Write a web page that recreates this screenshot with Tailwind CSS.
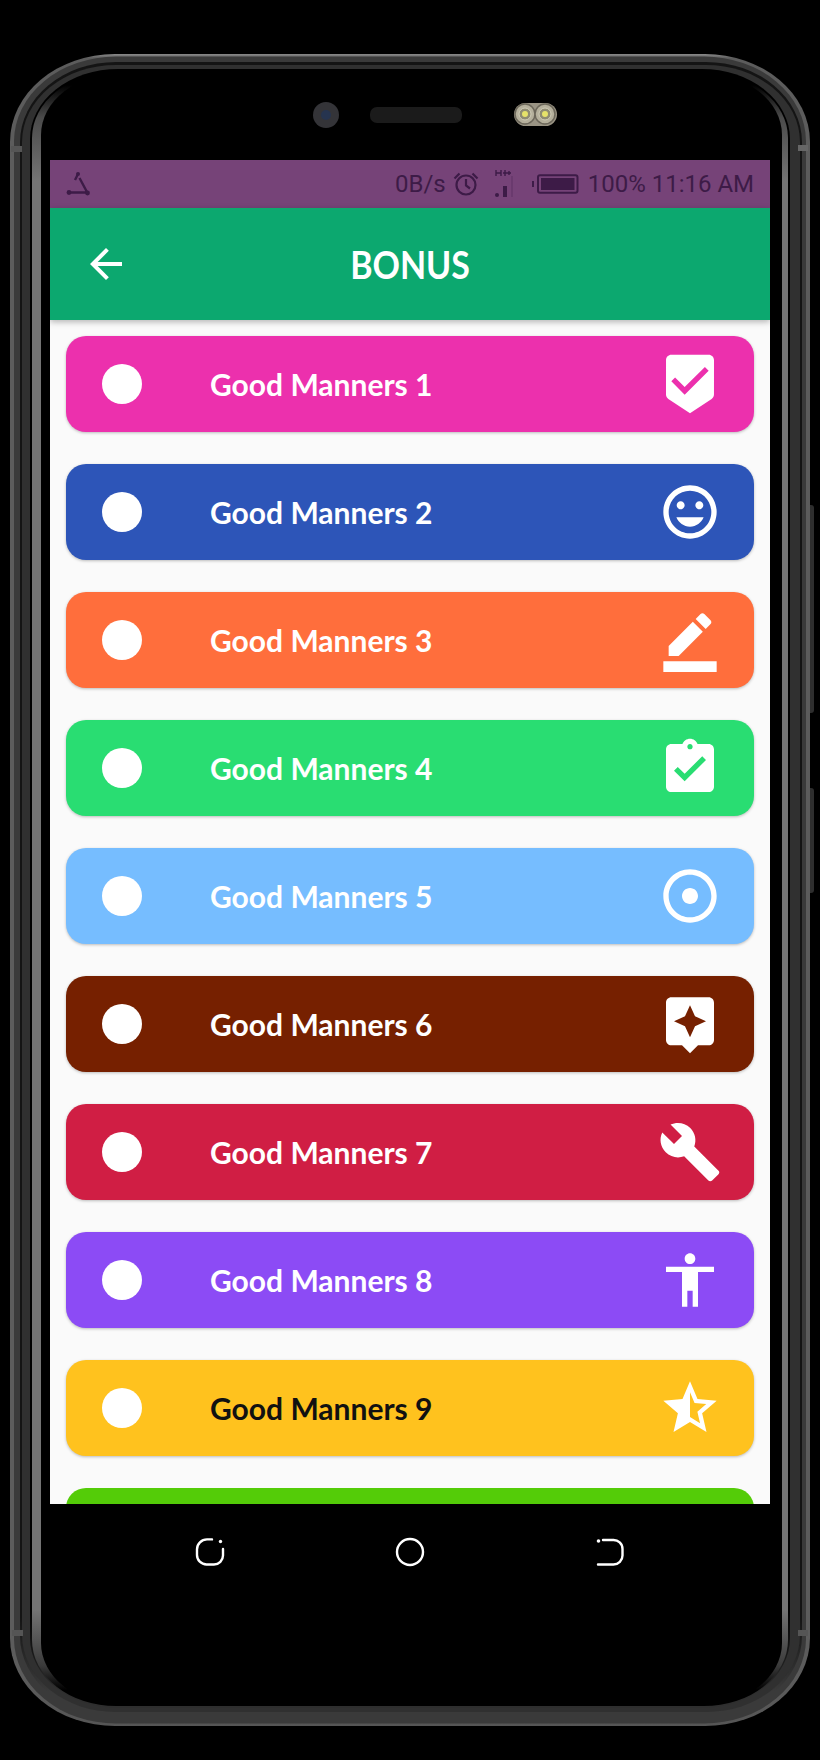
<!DOCTYPE html>
<html><head><meta charset="utf-8"><script src="https://cdn.jsdelivr.net/npm/@tailwindcss/browser@4"></script></head>
<body class="bg-black">
<div class="relative w-[820px] h-[1760px] bg-black overflow-hidden font-['Lato',sans-serif]">
  <svg class="absolute inset-0" width="820" height="1760" viewBox="0 0 820 1760">
    <defs>
      <linearGradient id="inner" gradientUnits="userSpaceOnUse" x1="0" y1="85" x2="0" y2="1690">
        <stop offset="0" stop-color="#000"/><stop offset="0.02" stop-color="#4a4a4a"/><stop offset="0.06" stop-color="#747474"/><stop offset="0.95" stop-color="#747474"/><stop offset="0.985" stop-color="#3a3a3a"/><stop offset="1" stop-color="#000"/>
      </linearGradient>
      <linearGradient id="outer" gradientUnits="userSpaceOnUse" x1="0" y1="54" x2="0" y2="1726">
        <stop offset="0" stop-color="#8a8a8a"/><stop offset="0.0025" stop-color="#5c5c5c"/><stop offset="0.97" stop-color="#5c5c5c"/><stop offset="1" stop-color="#555"/>
      </linearGradient>
      <linearGradient id="gap" gradientUnits="userSpaceOnUse" x1="0" y1="62" x2="0" y2="1716">
        <stop offset="0" stop-color="#141414"/><stop offset="0.94" stop-color="#141414"/><stop offset="0.985" stop-color="#3a3a3a"/><stop offset="1" stop-color="#3a3a3a"/>
      </linearGradient>
      <linearGradient id="gap2" gradientUnits="userSpaceOnUse" x1="0" y1="70" x2="0" y2="1708">
        <stop offset="0" stop-color="#000"/><stop offset="0.94" stop-color="#000"/><stop offset="0.99" stop-color="#2e2e2e"/><stop offset="1" stop-color="#2e2e2e"/>
      </linearGradient>
    </defs>
    <rect x="806" y="505" width="8" height="208" rx="3" fill="#2e2e2e"/>
    <rect x="806" y="788" width="8" height="105" rx="3" fill="#2e2e2e"/>
    <rect x="10" y="54" width="800" height="1672" rx="105" ry="88" fill="url(#outer)"/>
    <rect x="14" y="56.5" width="792" height="1667" rx="102" ry="85" fill="#3a3a3a"/>
    <rect x="20" y="62" width="782" height="1654" rx="96" ry="80" fill="url(#gap)"/>
    <rect x="22" y="65" width="778" height="1647" rx="94" ry="77" fill="#303030"/>
    <rect x="30" y="69" width="760" height="1639" rx="88" ry="70" fill="url(#gap2)"/>
    <rect x="32" y="72" width="756" height="1634" rx="84" ry="66" fill="url(#inner)"/>
    <rect x="41" y="73" width="741" height="1632" rx="80" ry="62" fill="#000"/>
    <rect x="11" y="146" width="11" height="6" fill="#555"/>
    <rect x="12" y="1630" width="11" height="6" fill="#555"/>
    <rect x="798" y="145" width="10" height="6" fill="#666"/>
    <rect x="798" y="1630" width="10" height="6" fill="#555"/>
    <circle cx="326" cy="115" r="13" fill="#343438"/><circle cx="326" cy="115" r="5" fill="#26344f"/>
    <rect x="370" y="107" width="92" height="16" rx="7" fill="#1b1b1b"/>
    <rect x="514" y="103" width="43" height="23" rx="11.5" fill="#9a9484"/>
    <circle cx="525" cy="114" r="10" fill="#b5b09c" stroke="#6c675a" stroke-width="1.5"/><circle cx="525" cy="114" r="6" fill="#8f8b72" stroke="#d0ccb8"/><circle cx="525" cy="114" r="3" fill="#e6e26a"/>
    <circle cx="545" cy="114" r="10" fill="#b5b09c" stroke="#6c675a" stroke-width="1.5"/><circle cx="545" cy="114" r="6" fill="#8f8b72" stroke="#d0ccb8"/><circle cx="545" cy="114" r="3" fill="#e6e26a"/>
  </svg>

  <div class="relative pt-[160px] px-[50px]">
    <div class="h-[1344px] bg-[#fafafa] flex flex-col overflow-hidden">
      <div class="h-[48px] shrink-0 bg-[#764378] flex items-center text-[#3d1b47] text-[24px] font-['Roboto',sans-serif]">
        <svg class="ml-[16px]" width="26" height="26" viewBox="0 0 26 26" fill="none" stroke="#3d1b47" stroke-width="2.400"><path d="M11.500 4L9 9M13.500 7l7.500 14M4 21.500h16"/><circle cx="12" cy="3" r="2" fill="#3d1b47" stroke="none"/><circle cx="3" cy="21.500" r="2.400" fill="#3d1b47" stroke="none"/><circle cx="21.500" cy="22" r="2.400" fill="#3d1b47" stroke="none"/></svg>
        <span class="ml-[303px] w-[50px]">0B/s</span>
        <svg class="ml-[7px]" width="28" height="28" viewBox="0 0 28 28" fill="none" stroke="#3d1b47" stroke-width="2.200"><circle cx="14" cy="15" r="9.500"/><path d="M14 9v6.500l4 3M2.500 8.500L7.500 3.500M25.500 8.500L20.500 3.500"/></svg>
        <svg class="ml-[13px]" width="24" height="32" viewBox="0 0 24 32"><path d="M3 2v6M8 2v6M3 5h5M12 2v6M10 5h4M14 5h4M16 3v4" stroke="#3d1b47" stroke-width="1.400" fill="none"/><circle cx="4" cy="27" r="2" fill="#3d1b47"/><rect x="10" y="18" width="4" height="11" fill="#3d1b47"/><rect x="18" y="8" width="2" height="21" fill="#3d1b47" fill-opacity=".2"/></svg>
        <svg class="ml-[15px]" width="47" height="20" viewBox="0 0 47 20" fill="none"><rect x="0" y="7" width="2" height="6" fill="#3d1b47"/><rect x="6" y="1.200" width="39.500" height="17.600" rx="2" stroke="#3d1b47" stroke-width="2"/><rect x="9" y="4" width="33.500" height="12" fill="#3d1b47"/></svg>
        <span class="ml-auto mr-[16px] whitespace-nowrap">100% 11:16 AM</span>
      </div>
      <div class="h-[112px] shrink-0 bg-[#0ca86f] flex items-center relative shadow-[0_2px_6px_rgba(0,0,0,0.28)] z-10">
        <svg class="ml-[32px]" width="48" height="48" viewBox="0 0 24 24" fill="#fff"><path d="M20 11H7.830l5.590-5.590L12 4l-8 8 8 8 1.410-1.410L7.830 13H20v-2z"/></svg>
        <h1 class="absolute inset-x-0 text-center text-white text-[39px] font-bold leading-none scale-x-[.87]">BONUS</h1>
      </div>
      <div class="flex-1 min-h-0 overflow-hidden px-[16px] pt-[16px] flex flex-col gap-[32px]">
        <div class="h-[96px] shrink-0 rounded-[20px] bg-[#ec30ad] shadow-[0_1px_3px_rgba(0,0,0,0.25)] flex items-center text-white text-[30px] font-bold pr-[32px]"><span class="ml-[36px] w-[40px] h-[40px] rounded-full bg-white shrink-0"></span><span class="ml-[68px] flex-1">Good Manners 1</span><svg width="64" height="64" viewBox="0 0 24 24" fill="#fff"><path d="M19 1H5c-1.100 0-1.990.9-1.990 2L3 15.930c0 .69.35 1.300.88 1.660L12 23l8.110-5.410c.53-.36.88-.97.88-1.660L21 3c0-1.100-.9-2-2-2zm-9 15l-5-5 1.410-1.410L10 13.170l7.590-7.590L19 7l-9 9z"/></svg></div>
        <div class="h-[96px] shrink-0 rounded-[20px] bg-[#2d55b8] shadow-[0_1px_3px_rgba(0,0,0,0.25)] flex items-center text-white text-[30px] font-bold pr-[32px]"><span class="ml-[36px] w-[40px] h-[40px] rounded-full bg-white shrink-0"></span><span class="ml-[68px] flex-1">Good Manners 2</span><svg width="64" height="64" viewBox="0 0 24 24" fill="#fff"><path d="M11.990 2C6.470 2 2 6.480 2 12s4.470 10 9.990 10C17.520 22 22 17.520 22 12S17.520 2 11.990 2zM12 20c-4.420 0-8-3.580-8-8s3.580-8 8-8 8 3.580 8 8-3.580 8-8 8zm3.500-9c.83 0 1.500-.67 1.500-1.500S16.330 8 15.500 8 14 8.670 14 9.500s.67 1.500 1.500 1.500zm-7 0c.83 0 1.500-.67 1.500-1.500S9.330 8 8.500 8 7 8.670 7 9.500 7.670 11 8.500 11zm3.500 6.500c2.330 0 4.310-1.460 5.110-3.500H6.890c.8 2.040 2.780 3.500 5.110 3.500z"/></svg></div>
        <div class="h-[96px] shrink-0 rounded-[20px] bg-[#ff6e3c] shadow-[0_1px_3px_rgba(0,0,0,0.25)] flex items-center text-white text-[30px] font-bold pr-[32px]"><span class="ml-[36px] w-[40px] h-[40px] rounded-full bg-white shrink-0"></span><span class="ml-[68px] flex-1">Good Manners 3</span><svg width="64" height="64" viewBox="0 0 24 24" fill="#fff"><path d="M22 24H2v-4h20v4zM13.060 5.190l3.750 3.750L7.750 18H4v-3.750l9.060-9.060zm4.820 2.680l-3.750-3.750 1.830-1.830c.39-.39 1.020-.39 1.410 0l2.340 2.340c.39.39.39 1.020 0 1.410l-1.830 1.830z"/></svg></div>
        <div class="h-[96px] shrink-0 rounded-[20px] bg-[#29dd72] shadow-[0_1px_3px_rgba(0,0,0,0.25)] flex items-center text-white text-[30px] font-bold pr-[32px]"><span class="ml-[36px] w-[40px] h-[40px] rounded-full bg-white shrink-0"></span><span class="ml-[68px] flex-1">Good Manners 4</span><svg width="64" height="64" viewBox="0 0 24 24" fill="#fff"><path d="M19 3h-4.180C14.400 1.840 13.300 1 12 1c-1.300 0-2.400.84-2.820 2H5c-1.100 0-2 .9-2 2v14c0 1.100.9 2 2 2h14c1.100 0 2-.9 2-2V5c0-1.100-.9-2-2-2zm-7 0c.55 0 1 .45 1 1s-.45 1-1 1-1-.45-1-1 .45-1 1-1zm-2 14l-4-4 1.410-1.410L10 14.170l6.590-6.590L18 9l-8 8z"/></svg></div>
        <div class="h-[96px] shrink-0 rounded-[20px] bg-[#76bdff] shadow-[0_1px_3px_rgba(0,0,0,0.25)] flex items-center text-white text-[30px] font-bold pr-[32px]"><span class="ml-[36px] w-[40px] h-[40px] rounded-full bg-white shrink-0"></span><span class="ml-[68px] flex-1">Good Manners 5</span><svg width="64" height="64" viewBox="0 0 24 24" fill="#fff"><path d="M12 2C6.490 2 2 6.490 2 12s4.490 10 10 10 10-4.490 10-10S17.510 2 12 2zm0 18c-4.410 0-8-3.590-8-8s3.590-8 8-8 8 3.590 8 8-3.590 8-8 8zm3-8c0 1.660-1.340 3-3 3s-3-1.340-3-3 1.340-3 3-3 3 1.340 3 3z"/></svg></div>
        <div class="h-[96px] shrink-0 rounded-[20px] bg-[#762000] shadow-[0_1px_3px_rgba(0,0,0,0.25)] flex items-center text-white text-[30px] font-bold pr-[32px]"><span class="ml-[36px] w-[40px] h-[40px] rounded-full bg-white shrink-0"></span><span class="ml-[68px] flex-1">Good Manners 6</span><svg width="64" height="64" viewBox="0 0 24 24" fill="#fff"><path d="M19 2H5c-1.110 0-2 .9-2 2v14c0 1.100.89 2 2 2h4l3 3 3-3h4c1.100 0 2-.9 2-2V4c0-1.100-.9-2-2-2zm-5.120 10.880L12 17l-1.880-4.120L6 11l4.120-1.880L12 5l1.880 4.120L18 11l-4.120 1.880z"/></svg></div>
        <div class="h-[96px] shrink-0 rounded-[20px] bg-[#d01e44] shadow-[0_1px_3px_rgba(0,0,0,0.25)] flex items-center text-white text-[30px] font-bold pr-[32px]"><span class="ml-[36px] w-[40px] h-[40px] rounded-full bg-white shrink-0"></span><span class="ml-[68px] flex-1">Good Manners 7</span><svg width="64" height="64" viewBox="0 0 24 24" fill="#fff"><path d="M22.700 19l-9.100-9.100c.9-2.300.4-5-1.500-6.900-2-2-5-2.400-7.400-1.300L9 6 6 9 1.600 4.700C.4 7.100.9 10.100 2.900 12.100c1.900 1.900 4.600 2.400 6.900 1.500l9.100 9.100c.4.4 1 .4 1.400 0l2.300-2.300c.5-.4.5-1.100.1-1.400z"/></svg></div>
        <div class="h-[96px] shrink-0 rounded-[20px] bg-[#8c4bf5] shadow-[0_1px_3px_rgba(0,0,0,0.25)] flex items-center text-white text-[30px] font-bold pr-[32px]"><span class="ml-[36px] w-[40px] h-[40px] rounded-full bg-white shrink-0"></span><span class="ml-[68px] flex-1">Good Manners 8</span><svg width="64" height="64" viewBox="0 0 24 24" fill="#fff"><path d="M12 2c1.100 0 2 .9 2 2s-.9 2-2 2-2-.9-2-2 .9-2 2-2zm9 7h-6v13h-2v-6h-2v6H9V9H3V7h18v2z"/></svg></div>
        <div class="h-[96px] shrink-0 rounded-[20px] bg-[#ffc21e] shadow-[0_1px_3px_rgba(0,0,0,0.25)] flex items-center text-[#111] text-[30px] font-bold pr-[32px]"><span class="ml-[36px] w-[40px] h-[40px] rounded-full bg-white shrink-0"></span><span class="ml-[68px] flex-1">Good Manners 9</span><svg width="64" height="64" viewBox="0 0 24 24" fill="#fff"><path d="M22 9.240l-7.190-.62L12 2 9.190 8.630 2 9.240l5.460 4.730L5.820 21 12 17.270 18.180 21l-1.630-7.030L22 9.240zM12 15.400V6.100l1.710 4.040 4.380.38-3.320 2.880 1 4.280L12 15.400z"/></svg></div>
        <div class="h-[96px] shrink-0 rounded-[20px] bg-[#54cc08]"></div>
      </div>
    </div>
    <div class="h-[96px] flex items-center justify-center gap-[168px]">
      <svg width="32" height="32" viewBox="0 0 32 32" fill="none" stroke="#fff" stroke-width="2.400" stroke-linecap="round"><path d="M18 3.400H13A10 10 0 0 0 3 13.400V19a9.500 9.500 0 0 0 9.500 9.500H20a9 9 0 0 0 9-9V13"/><circle cx="26.500" cy="5.500" r="1.700" fill="#fff" stroke="none"/></svg>
      <svg width="32" height="32" viewBox="0 0 32 32" fill="none" stroke="#fff" stroke-width="2.400"><circle cx="16" cy="16" r="13"/></svg>
      <svg width="32" height="32" viewBox="0 0 32 32" fill="none" stroke="#fff" stroke-width="2.400" stroke-linecap="round"><path d="M9 4H19a9 9 0 0 1 9.500 9V19.500a9 9 0 0 1-9 9H4"/><circle cx="4.500" cy="5" r="1.800" fill="#fff" stroke="none"/></svg>
    </div>
  </div>
</div>
</body></html>
